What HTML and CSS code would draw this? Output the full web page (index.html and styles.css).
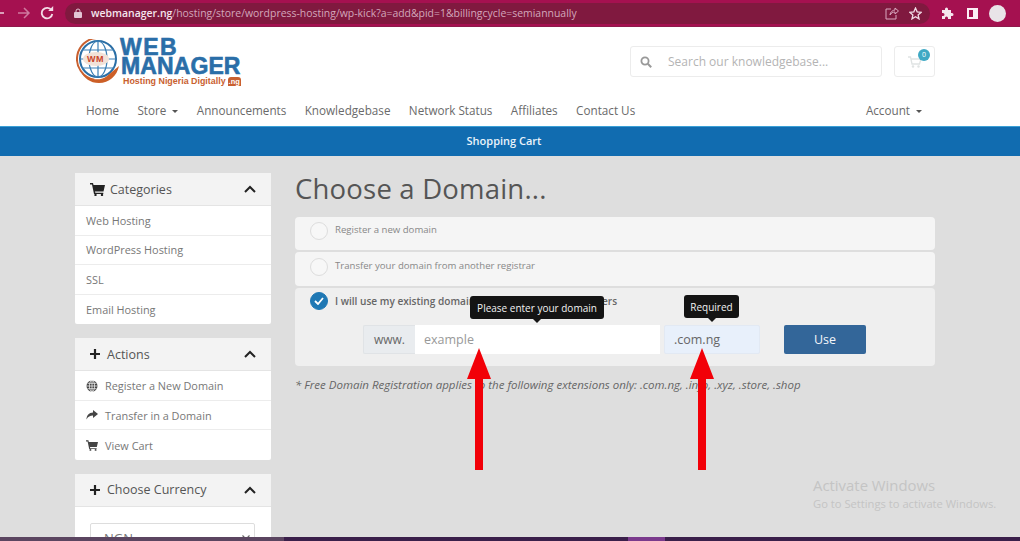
FILE: index.html
```html
<!DOCTYPE html>
<html lang="en">
<head>
<meta charset="utf-8">
<title>Choose a Domain</title>
<link rel="stylesheet" href="styles.css">
</head>
<body>
<div class="page">
  <div class="browser">
    <svg class="b-nav back" width="4" height="12" viewBox="0 0 4 12"><path d="M0 6h4" fill="none" stroke="#e8c3d4" stroke-width="1.600"/></svg>
    <svg class="b-nav fwd" width="14" height="12" viewBox="0 0 14 12"><path d="M1 6h11M7 1l5 5-5 5" fill="none" stroke="#cf7a9f" stroke-width="1.500"/></svg>
    <svg class="b-nav reload" width="14" height="14" viewBox="0 0 14 14"><path d="M11.5 4.2A5.3 5.3 0 1 0 12.3 8" fill="none" stroke="#f3dbe6" stroke-width="1.8"/><path d="M8.2 5h5V0z" fill="#f3dbe6"/></svg>
    <div class="omnibox">
      <svg class="lock" width="8" height="10" viewBox="0 0 8 10"><path d="M2 4V3a2 2 0 0 1 4 0v1" fill="none" stroke="#e3c6d4" stroke-width="1"/><rect y="4" width="8" height="6" rx="1" fill="#e3c6d4"/></svg>
      <span class="url"><b>webmanager.ng</b>/hosting/store/wordpress-hosting/wp-kick?a=add&amp;pid=1&amp;billingcycle=semiannually</span>
      <svg class="omni-icon" width="14" height="13" viewBox="0 0 14 13"><path d="M6 2H1v10h10V8M5 8c0-3 3-5 5-5V1l3.500 3L10 7V5C8 5 6 6 5 8z" fill="none" stroke="#d9a9c0" stroke-width="1"/></svg>
      <svg class="omni-icon star" width="13" height="13" viewBox="0 0 24 24"><path d="M12 2l3 7 7.500.7-5.700 5 1.700 7.300L12 18l-6.500 4 1.700-7.300-5.700-5L9 9z" fill="none" stroke="#f0dbe5" stroke-width="2.400"/></svg>
    </div>
    <svg class="ext" width="13" height="13" viewBox="0 0 13 13"><path d="M1 3h3V2a1.500 1.500 0 0 1 3 0v1h3v3h1a1.500 1.500 0 0 1 0 3h-1v3H7v-1a1.500 1.500 0 0 0-3 0v1H1V9h1a1.500 1.500 0 0 0 0-3H1z" fill="#f6e6ee"/></svg>
    <svg class="panel" width="11" height="11" viewBox="0 0 11 11"><path d="M0 0h11v11H0zM2 2v7h4V2z" fill="#fbeef4" fill-rule="evenodd"/></svg>
    <div class="avatar"></div>
  </div>

  <header class="site-header">
    <div class="container">
      <div class="brand-row">
        <a class="logo">
          <svg class="globe" width="46" height="48" viewBox="0 0 46 48">
            <circle cx="22" cy="20" r="18" fill="#fff" stroke="#2a6ea5" stroke-width="2"/>
            <circle cx="22" cy="20" r="21" fill="none" stroke="#c9602f" stroke-width="2" stroke-dasharray="60 90" transform="rotate(100 22 20)"/>
            <g fill="none" stroke="#3b7fb5" stroke-width="1.200">
              <ellipse cx="22" cy="20" rx="9" ry="18"/>
              <path d="M22 2v36M6 11h32M6 29h32M4 20h36"/>
            </g>
            <ellipse cx="20" cy="20" rx="13" ry="7" fill="#f2e2d8"/>
            <path d="M5 33c8 9 20 9 26 4l12-10c-2 10-10 17-20 17C14 44 8 39 5 33z" fill="#cc5f27"/>
          </svg>
          <span class="wm">WM</span>
          <span class="logo-text">
            <span class="logo-web">WEB</span>
            <span class="logo-manager">MANAGER</span>
            <span class="logo-tag">Hosting Nigeria Digitally<i class="ng">.ng</i></span>
          </span>
        </a>
        <div class="header-tools">
          <div class="search">
            <svg width="12" height="12" viewBox="0 0 12 12"><circle cx="5" cy="5" r="3.600" fill="none" stroke="#999" stroke-width="1.800"/><path d="M7.800 7.800l3.400 3.400" stroke="#999" stroke-width="2"/></svg>
            <span>Search our knowledgebase...</span>
          </div>
          <div class="cart">
            <svg width="14" height="12" viewBox="0 0 14 12"><path d="M0 1h2.500l1.500 7h7.500l1.500-5H3" fill="none" stroke="#dfe3e3" stroke-width="1.300"/><circle cx="5" cy="10.500" r="1.200" fill="#dfe3e3"/><circle cx="10.500" cy="10.500" r="1.200" fill="#dfe3e3"/></svg>
            <span class="badge">0</span>
          </div>
        </div>
      </div>
      <nav class="main-nav">
        <a>Home</a>
        <a class="caret">Store</a>
        <a>Announcements</a>
        <a>Knowledgebase</a>
        <a>Network Status</a>
        <a>Affiliates</a>
        <a>Contact Us</a>
        <a class="caret account">Account</a>
      </nav>
    </div>
  </header>

  <div class="title-bar"><div class="container">Shopping Cart</div></div>

  <main class="content">
    <div class="container columns">
      <aside class="sidebar">
        <section class="card">
          <h3 class="card-head">
            <svg class="head-icon" width="15" height="13" viewBox="0 0 15 13"><path d="M0 0h3l.5 2H15l-1.500 6.500H5l.3 1.300h8V11H4L2 1.500H0z" fill="#222"/><circle cx="5.500" cy="12" r="1.200" fill="#222"/><circle cx="12" cy="12" r="1.200" fill="#222"/></svg>
            <span>Categories</span>
            <svg class="chev" width="12" height="8" viewBox="0 0 12 8"><path d="M1 7l5-5 5 5" fill="none" stroke="#222" stroke-width="2"/></svg>
          </h3>
          <a class="row">Web Hosting</a>
          <a class="row">WordPress Hosting</a>
          <a class="row">SSL</a>
          <a class="row">Email Hosting</a>
        </section>
        <section class="card">
          <h3 class="card-head">
            <svg class="head-icon plus" width="12" height="12" viewBox="0 0 12 12"><path d="M6 1v10M1 6h10" stroke="#222" stroke-width="2.200"/></svg>
            <span>Actions</span>
            <svg class="chev" width="12" height="8" viewBox="0 0 12 8"><path d="M1 7l5-5 5 5" fill="none" stroke="#222" stroke-width="2"/></svg>
          </h3>
          <a class="row icon-row">
            <svg width="12" height="12" viewBox="0 0 12 12"><circle cx="6" cy="6" r="5.500" fill="#444"/><path d="M6 .5v11M.5 6h11M1.500 3.300h9M1.500 8.700h9" stroke="#fff" stroke-width=".7"/><ellipse cx="6" cy="6" rx="2.600" ry="5.500" fill="none" stroke="#fff" stroke-width=".7"/></svg>
            Register a New Domain</a>
          <a class="row icon-row">
            <svg width="12" height="10" viewBox="0 0 12 10"><path d="M7 0l5 4-5 4V5.500C4 5.500 2 6.500 .5 9.500 .5 5.500 3 2.700 7 2.500z" fill="#444"/></svg>
            Transfer in a Domain</a>
          <a class="row icon-row">
            <svg width="12" height="11" viewBox="0 0 15 13"><path d="M0 0h3l.5 2H15l-1.500 6.500H5l.3 1.300h8V11H4L2 1.500H0z" fill="#444"/><circle cx="5.500" cy="12" r="1.200" fill="#444"/><circle cx="12" cy="12" r="1.200" fill="#444"/></svg>
            View Cart</a>
        </section>
        <section class="card">
          <h3 class="card-head">
            <svg class="head-icon plus" width="12" height="12" viewBox="0 0 12 12"><path d="M6 1v10M1 6h10" stroke="#222" stroke-width="2.200"/></svg>
            <span>Choose Currency</span>
            <svg class="chev" width="12" height="8" viewBox="0 0 12 8"><path d="M1 7l5-5 5 5" fill="none" stroke="#222" stroke-width="2"/></svg>
          </h3>
          <div class="card-body"><div class="select">NGN<svg width="8" height="5" viewBox="0 0 8 5"><path d="M.5.500L4 4 7.500.500" fill="none" stroke="#666" stroke-width="1.200"/></svg></div></div>
        </section>
      </aside>

      <section class="primary">
        <h1>Choose a Domain...</h1>
        <div class="option">
          <span class="radio"></span><span>Register a new domain</span>
        </div>
        <div class="option second">
          <span class="radio"></span><span>Transfer your domain from another registrar</span>
        </div>
        <div class="option active">
          <div class="option-title">
            <span class="radio checked"><svg width="10" height="8" viewBox="0 0 10 8"><path d="M1 4l3 3 5-6" fill="none" stroke="#fff" stroke-width="1.800"/></svg></span>
            <b>I will use my existing domain and update my nameservers</b>
          </div>
          <div class="domain-form">
            <div class="input-group">
              <span class="prefix">www.</span>
              <span class="field">example<span class="tip tip-domain">Please enter your domain</span></span>
            </div>
            <span class="tld">.com.ng<span class="tip tip-req">Required</span></span>
            <button class="use">Use</button>
          </div>
        </div>
        <p class="note">* Free Domain Registration applies to the following extensions only: .com.ng, .info, .xyz, .store, .shop</p>
      </section>
    </div>
    <svg class="arrow arrow-a" width="24" height="122" viewBox="0 0 24 122"><path d="M8 122V31H0L12 0l12 31h-8v91z" fill="#f20008"/></svg>
    <svg class="arrow arrow-b" width="24" height="122" viewBox="0 0 24 122"><path d="M8 122V31H0L12 0l12 31h-8v91z" fill="#f20008"/></svg>
    <div class="activate">
      <div class="a1">Activate Windows</div>
      <div class="a2">Go to Settings to activate Windows.</div>
    </div>
  </main>
  <div class="taskbar"></div>
</div>
</body>
</html>
```

FILE: styles.css
```css
* { box-sizing: border-box; }
html, body { margin: 0; padding: 0; height: 100%; }
body { font-family: "Open Sans", "Liberation Sans", sans-serif; color: #666; overflow: hidden; }
.page { height: 100vh; display: flex; flex-direction: column; overflow: hidden; position: relative; background: #dedede; }
.container { width: 860px; margin-left: 75px; }

.browser { height: 27px; flex: none; background: #a51150; display: flex; align-items: center; border-bottom: 1px solid #8f1a4c; position: relative; }
.b-nav { flex: none; }
.fwd { margin-left: 13px; }
.reload { margin-left: 9px; }
.omnibox { margin-left: 11px; width: 865px; height: 21px; border-radius: 11px; background: #80193f; display: flex; align-items: center; padding-left: 9px; padding-right: 8px; }
.lock { flex: none; }
.url { margin-left: 9px; font-size: 10.450px; color: #d3a7bb; flex: 1; white-space: nowrap; }
.url b { font-weight: 600; color: #f5e6ee; }
.omni-icon { flex: none; }
.star { margin-left: 10px; }
.ext { margin-left: 11px; flex: none; }
.panel { margin-left: 13px; flex: none; }
.avatar { margin-left: 11px; width: 17px; height: 17px; border-radius: 50%; background: #e9e4e8; flex: none; }

.site-header { height: 99px; background: #fff; flex: none; }
.brand-row { height: 67px; display: flex; justify-content: space-between; align-items: flex-start; padding-top: 11px; }
.logo { display: flex; position: relative; align-items: flex-start; }
.globe { flex: none; margin-top: 1px; margin-left: 1px; }
.wm { position: absolute; left: 12px; top: 16px; font: bold 9px "Liberation Sans", sans-serif; color: #c9442a; letter-spacing: .5px; }
.logo-text { display: flex; flex-direction: column; font-family: "Liberation Sans", sans-serif; color: #2a6ea8; font-weight: bold; margin-left: -2px; }
.logo-web { font-size: 23px; line-height: 18px; -webkit-text-stroke: .6px #2a6ea8; letter-spacing: 1.500px; }
.logo-manager { font-size: 23px; line-height: 20px; -webkit-text-stroke: .6px #2a6ea8; letter-spacing: .1px; margin-left: 1px; }
.logo-tag { font-size: 8.900px; line-height: 10px; color: #c9602f; white-space: nowrap; margin-left: 3px; }
.ng { font-style: normal; background: #c9602f; color: #fff; border-radius: 3px 3px 0 0; font-size: 7.500px; margin-left: 2px; padding: 0 1px; }
.header-tools { display: flex; gap: 12px; padding-top: 8px; }
.search { width: 252px; height: 31px; border: 1px solid #ececec; border-radius: 3px; display: flex; align-items: center; padding-left: 9px; font-size: 12px; color: #b4b4b4; gap: 16px; }
.cart { width: 41px; height: 31px; border: 1px solid #ececec; border-radius: 3px; position: relative; display: flex; align-items: center; justify-content: center; }
.badge { position: absolute; right: 4px; top: 2px; width: 12px; height: 12px; border-radius: 50%; background: #3fa9c4; color: #fff; font-size: 7px; line-height: 12px; text-align: center; }
.main-nav { display: flex; align-items: center; height: 31px; padding-left: 11px; font-size: 11.700px; color: #6a6a6a; gap: 18.400px; }
.caret::after { content: ""; display: inline-block; margin-left: 6px; vertical-align: 2px; border: 3px solid transparent; border-top-color: #555; border-bottom: 0; }
.account { margin-left: auto; margin-right: 13px; }

.title-bar { height: 30px; flex: none; background: #116cb0; color: #eaf3fa; font-size: 11px; font-weight: 600; line-height: 27px; text-align: center; border-top: 1px solid #3aa0d6; }
.title-bar .container { width: 858px; }

.content { flex: 1; min-height: 0; position: relative; overflow: hidden; padding-top: 17px; }
.columns { display: flex; gap: 24px; align-items: flex-start; }
.sidebar { width: 196px; flex: none; display: flex; flex-direction: column; gap: 14px; }
.card { background: #fff; border-radius: 2px; }
.card-head { margin: 0; height: 33px; display: flex; align-items: center; background: #f3f3f3; border-bottom: 1px solid #e4e4e4; font-size: 12.500px; font-weight: 400; color: #555; padding-left: 15px; padding-right: 15px; }
.head-icon { margin-right: 5px; flex: none; }
.plus { margin-left: -1px; margin-right: 6px; }
.chev { margin-left: auto; flex: none; }
.row { display: flex; align-items: center; height: 29.500px; padding-left: 11px; font-size: 10.900px; color: #777; border-bottom: 1px solid #ececec; }
.row:last-child { border-bottom: 0; }
.icon-row { gap: 7px; padding-top: 1px; }
.card-body { padding: 16px 16px 16px 15px; height: 70px; }
.select { height: 30px; border: 1px solid #ddd; border-radius: 2px; padding: 0 4px 0 13px; font-size: 13px; line-height: 28px; color: #777; display: flex; justify-content: space-between; align-items: center; }

.primary { flex: 1; min-width: 0; }
h1 { margin: 0; font-size: 27.500px; font-weight: 400; color: #555; line-height: 32px; letter-spacing: .2px; }
.option { margin-top: 12px; height: 33px; background: #f5f5f5; border-radius: 4px; display: flex; align-items: flex-start; padding: 5px 0 0 15px; gap: 7px; font-size: 9.600px; color: #888; line-height: 16px; }
.option.second { margin-top: 2px; height: 34px; padding-top: 6px; }
.option.active { margin-top: 2px; height: 78px; background: #efefef; display: block; padding-top: 4px; }
.option-title { display: flex; align-items: flex-start; gap: 7px; color: #666; }
.option-title b { font-weight: 600; font-size: 10.100px; line-height: 18px; }
.radio { width: 18px; height: 18px; border-radius: 50%; border: 1px solid #ddd; background: #f7f7f7; flex: none; }
.radio.checked { background: #1f78b4; border-color: #1f78b4; display: flex; align-items: center; justify-content: center; }
.domain-form { display: flex; align-items: center; margin-top: 15px; padding-left: 53px; }
.input-group { display: flex; height: 29px; width: 297px; }
.prefix { width: 52px; background: #e9ecef; border: 1px solid #e0e3e6; border-right: 0; border-radius: 2px 0 0 2px; font-size: 12px; line-height: 27px; text-align: center; color: #666; }
.field { flex: 1; background: #fff; font-size: 12.500px; line-height: 29px; padding-left: 9px; color: #999; position: relative; }
.tld { margin-left: 4px; width: 96px; height: 29px; background: #e8f0fb; border: 1px solid #e2e9f3; font-size: 12.500px; line-height: 27px; padding-left: 9px; color: #666; position: relative; border-radius: 2px; }
.use { margin-left: 24px; width: 82px; height: 29px; border: 0; border-radius: 2px; background: #336699; color: #f3f6fa; font: 12.500px "Open Sans", sans-serif; padding: 0; }
.tip { position: absolute; bottom: 35px; height: 23px; background: #141414; color: #f2f2f2; border-radius: 3px; font-size: 10px; font-weight: 400; line-height: 24px; text-align: center; white-space: nowrap; }
.tip::after { content: ""; position: absolute; left: 50%; top: 100%; margin-left: -4px; border: 4px solid transparent; border-top-color: #141414; border-bottom: 0; }
.tip-domain { left: 55px; width: 134px; }
.tip-req { left: 19px; width: 55px; }
.note { margin: 11px 0 0; font-size: 11.500px; line-height: 16px; font-style: italic; color: #666; }

.arrow { position: absolute; top: 192px; }
.arrow-a { left: 467px; }
.arrow-b { left: 690px; }
.activate { position: absolute; left: 813px; top: 321px; color: #c4c4c4; white-space: nowrap; }
.a1 { font-size: 14.900px; line-height: 17px; }
.a2 { font-size: 11.200px; line-height: 19px; }
.taskbar { height: 4px; flex: none; background: linear-gradient(90deg, #5b4560 0, #5b4560 284px, #3a1f4a 284px, #3a1f4a 628px, #7a3a8c 628px, #7a3a8c 665px, #3a1f4a 665px); }
```
